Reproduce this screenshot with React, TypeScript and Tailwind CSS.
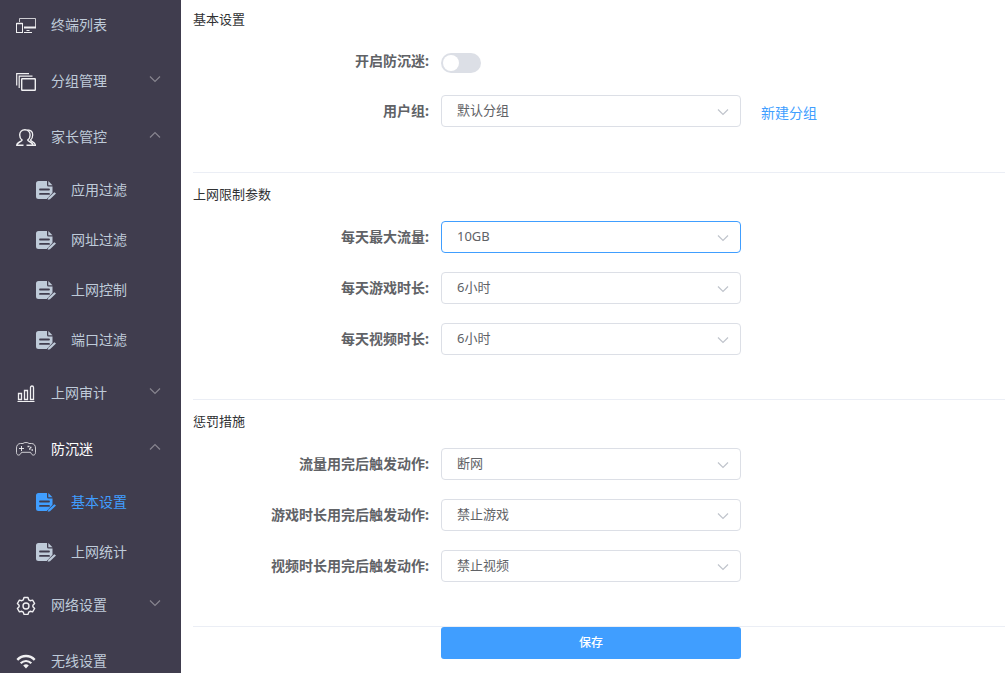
import React, { useState } from 'react';

interface SubItem {
  label: string;
  active?: boolean;
}

interface MenuItem {
  label: string;
  icon: React.ReactNode;
  expandable?: boolean;
  current?: boolean;
  children?: SubItem[];
}

const Svg: React.FC<{ children: React.ReactNode }> = ({ children }) => (
  <svg viewBox="0 0 20 20" className="w-5 h-5 shrink-0" fill="none" stroke="currentColor" aria-hidden="true">
    {children}
  </svg>
);

const DevicesIcon = () => (
  <Svg>
    <path d="M3.5 7V3.5h16V13" opacity="0.8" />
    <rect x="0.5" y="8.5" width="6" height="9" />
    <path d="M0.5 8.5h6" strokeWidth="1.5" />
    <path d="M8 12.5h12" strokeWidth="2" />
    <path d="M8 17.5h8M10.5 15.5h3" />
  </Svg>
);

const LayersIcon = () => (
  <Svg>
    <rect x="5.7" y="7.7" width="13.6" height="11.6" rx="0.5" strokeWidth="1.4" />
    <path d="M3.2 17V5.2H16.5" strokeWidth="1.2" />
    <path d="M0.7 14.5V2.6H13" strokeWidth="1.2" />
  </Svg>
);

const UsersIcon = () => (
  <Svg>
    <path
      d="M7.5 18.3H.8c0-3.4 4.900-3.400 5.300-5.200C4.500 11.900 3.700 10 3.700 7.900 3.700 4.900 5.800 2.700 8.900 2.700s5.200 2.200 5.200 5.200c0 2.100-.8 4-2.400 5.200.4 1.800 5.300 1.800 5.300 5.200h-6.500"
      strokeWidth="1.4"
    />
    <path d="M11.500 2.900c3.300.2 5.200 2.200 5.200 5 0 2-.8 3.900-2.200 5.100.4 1.600 4.800 2 4.900 5.300H17" strokeWidth="1.3" />
  </Svg>
);

const BarsIcon = () => (
  <Svg>
    <path d="M2.500 16.500v-6h3v6zM8.500 16.500v-9h3v9zM14.500 16.500v-12q0-1.500 1.500-1.500t1.500 1.500v12z" strokeWidth="1.3" />
    <path d="M1.500 18.500h17" />
  </Svg>
);

const GamepadIcon = () => (
  <Svg>
    <path
      d="M7 4.500H4.500C2 4.500.500 6.500.500 9v4.500c0 3 3 3.200 4 1.500l1-1.700h9l1 1.700c1 1.700 4 1.500 4-1.500V9c0-2.500-1.500-4.500-4-4.500H13q-.8-1-3-1t-3 1z"
      opacity="0.8"
    />
    <path d="M3 9.500h5M5.500 7v5" opacity="0.9" />
    <path d="M11.500 7.500h2M14 8.500h1.500M13 10h1.500M15.500 11h1.500" strokeWidth="1.4" opacity="0.9" />
  </Svg>
);

const GearIcon = () => (
  <Svg>
    <path
      d="M8 2.500h4l.7 2.300 1.500.9 2.400-.6 2 3.400-1.700 1.700v1.600l1.700 1.700-2 3.400-2.400-.6-1.500.9-.7 2.200H8l-.7-2.200-1.500-.9-2.400.6-2-3.400 1.700-1.700v-1.600L1.400 8.500l2-3.400 2.400.6 1.500-.9z"
      strokeWidth="1.4"
      strokeLinejoin="round"
    />
    <circle cx="10" cy="11" r="3" strokeWidth="1.4" />
  </Svg>
);

const WifiIcon = () => (
  <Svg>
    <path d="M1.300 8.800Q5 5 10 5t8.700 3.800" strokeWidth="2.400" />
    <path d="M4.700 12.300Q7 10 10 10t5.300 2.300" strokeWidth="2.200" />
    <path d="M7.200 14.500Q10 12.200 12.800 14.500L10 17.500z" fill="currentColor" stroke="none" />
  </Svg>
);

const DocEditIcon = () => (
  <Svg>
    <path
      fill="currentColor"
      stroke="none"
      fillRule="evenodd"
      d="M2.500 1H11v4q0 1.500 1.500 1.500h4v6.300L10.800 19H2.500Q0 19 0 16.500v-13Q0 1 2.500 1zM4 8.600a.9.900 0 0 0 0 1.800h9a.9.900 0 0 0 0-1.800zM4 13a.9.900 0 0 0 0 1.800h9a.9.900 0 0 0 0-1.800z"
    />
    <path fill="currentColor" stroke="none" d="M12.300 1l4.200 4.200h-4.200z" />
    <path fill="currentColor" stroke="none" d="M11.700 19.800l.6-2L18.300 12.200l1.700 1.300L14 19.300z" />
  </Svg>
);

const Chevron: React.FC<{ up?: boolean; className?: string }> = ({ up, className }) => (
  <svg viewBox="0 0 12 12" className={className} fill="none" stroke="currentColor" strokeWidth="1.2" aria-hidden="true">
    <path d={up ? 'M1 8.500L6 3.500L11 8.500' : 'M1 3.500L6 8.500L11 3.500'} />
  </svg>
);

const menu: MenuItem[] = [
  { label: '终端列表', icon: <DevicesIcon /> },
  { label: '分组管理', icon: <LayersIcon />, expandable: true },
  {
    label: '家长管控',
    icon: <UsersIcon />,
    expandable: true,
    children: [{ label: '应用过滤' }, { label: '网址过滤' }, { label: '上网控制' }, { label: '端口过滤' }],
  },
  { label: '上网审计', icon: <BarsIcon />, expandable: true },
  {
    label: '防沉迷',
    icon: <GamepadIcon />,
    expandable: true,
    current: true,
    children: [{ label: '基本设置', active: true }, { label: '上网统计' }],
  },
  { label: '网络设置', icon: <GearIcon />, expandable: true },
  { label: '无线设置', icon: <WifiIcon /> },
];

const rowClass = 'w-full h-14 flex items-center gap-[15px] pl-4 pr-5 text-left';

const Sidebar = () => (
  <aside className="w-[181px] shrink-0 h-screen overflow-hidden bg-[#403d4e] text-sm text-[#bfcbd9]">
    <nav className="-mt-[3px]">
      {menu.map((item) => (
        <div key={item.label}>
          {item.expandable ? (
            <button type="button" aria-expanded={!!item.children} className={rowClass}>
              <span className="text-[#f0f0f2]">{item.icon}</span>
              <span className={item.current ? 'flex-1 text-white' : 'flex-1'}>{item.label}</span>
              <span className="pb-1 text-[#87858f]">
                <Chevron up={!!item.children} className="w-3 h-3" />
              </span>
            </button>
          ) : (
            <a href="#" className={rowClass}>
              <span className="text-[#f0f0f2]">{item.icon}</span>
              <span>{item.label}</span>
            </a>
          )}
          {item.children?.map((sub) => (
            <a
              key={sub.label}
              href="#"
              className={`h-[50px] flex items-center gap-[15px] pl-9 ${sub.active ? 'text-[#409eff]' : ''}`}
            >
              <DocEditIcon />
              <span>{sub.label}</span>
            </a>
          ))}
        </div>
      ))}
    </nav>
  </aside>
);

const labelClass = 'w-[248px] shrink-0 pr-3 text-right text-sm leading-8 font-bold text-[#606266]';

interface SelectRowProps {
  id: string;
  label: string;
  options: string[];
  highlighted?: boolean;
  children?: React.ReactNode;
}

const SelectRow: React.FC<SelectRowProps> = ({ id, label, options, highlighted, children }) => {
  const [value, setValue] = useState(options[0]);

  return (
    <div className="flex items-start">
      <label htmlFor={id} className={labelClass}>{label}:</label>
      <div className="relative w-[300px]">
        <select
          id={id}
          value={value}
          onChange={(e) => setValue(e.target.value)}
          className={`block w-full h-8 appearance-none rounded border bg-white pl-[15px] pr-8 text-[13px] text-[#606266] outline-none ${
            highlighted ? 'border-[#409eff]' : 'border-[#dcdfe6]'
          }`}
        >
          {options.map((o) => <option key={o}>{o}</option>)}
        </select>
        <Chevron className="absolute right-3 top-[11px] w-3 h-3 text-[#c0c4cc] pointer-events-none" />
      </div>
      {children}
    </div>
  );
};

const Section: React.FC<{ title: string; first?: boolean; children: React.ReactNode }> = ({ title, first, children }) => (
  <section className={`pb-11 border-b border-[#ebeef5] ${first ? 'pt-[7px]' : 'pt-[9px]'}`}>
    <h2 className="text-[13px] leading-6 text-[#303133]">{title}</h2>
    <div className="mt-[15px] flex flex-col gap-[19px]">{children}</div>
  </section>
);

const App = () => {
  const [enabled, setEnabled] = useState(false);

  return (
    <div className="flex bg-white font-['Noto_Sans','Noto_Sans_CJK_SC',sans-serif]">
      <Sidebar />
      <main className="flex-1 h-screen overflow-hidden pl-3">
        <form onSubmit={(e) => e.preventDefault()}>
          <Section title="基本设置" first>
            <div className="h-[30px] flex items-center">
              <label htmlFor="enabled" className={labelClass}>开启防沉迷:</label>
              <input
                id="enabled"
                type="checkbox"
                role="switch"
                checked={enabled}
                onChange={(e) => setEnabled(e.target.checked)}
                className="mt-1 flex w-10 h-5 appearance-none items-center rounded-full bg-[#dcdfe6] px-0.5 before:block before:w-4 before:h-4 before:rounded-full before:bg-white checked:justify-end checked:bg-[#409eff]"
              />
            </div>
            <SelectRow id="group" label="用户组" options={['默认分组']}>
              <a href="#" className="ml-5 pt-0.5 text-sm leading-[31px] text-[#409eff]">新建分组</a>
            </SelectRow>
          </Section>

          <Section title="上网限制参数">
            <SelectRow id="traffic" label="每天最大流量" options={['10GB']} highlighted />
            <SelectRow id="game-time" label="每天游戏时长" options={['6小时']} />
            <SelectRow id="video-time" label="每天视频时长" options={['6小时']} />
          </Section>

          <Section title="惩罚措施">
            <SelectRow id="traffic-action" label="流量用完后触发动作" options={['断网']} />
            <SelectRow id="game-action" label="游戏时长用完后触发动作" options={['禁止游戏']} />
            <SelectRow id="video-action" label="视频时长用完后触发动作" options={['禁止视频']} />
          </Section>

          <div className="pl-[248px]">
            <button type="submit" className="block w-[300px] h-8 rounded-[3px] bg-[#409eff] text-xs font-medium text-white">
              保存
            </button>
          </div>
        </form>
      </main>
    </div>
  );
};

export default App;
